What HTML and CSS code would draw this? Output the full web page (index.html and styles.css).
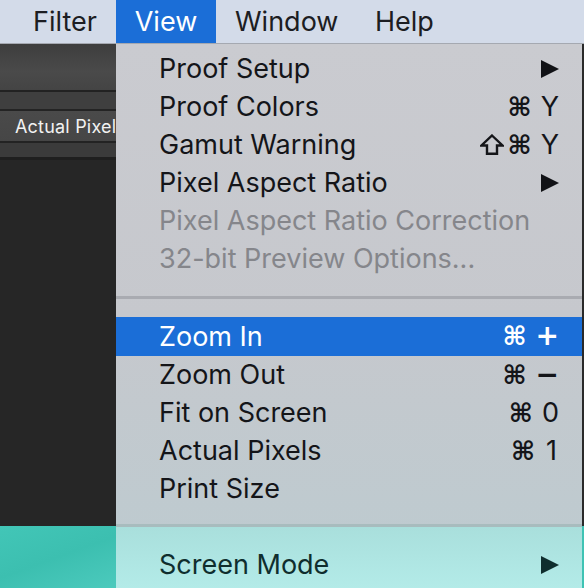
FILE: index.html
```html
<!DOCTYPE html>
<html>
<head>
<meta charset="utf-8">
<link rel="stylesheet" href="styles.css">
</head>
<body>
<div class="screen">
  <div class="menubar">
    <span class="mb-item mb-filter">Filter</span>
    <span class="mb-item mb-active">View</span>
    <span class="mb-item mb-window">Window</span>
    <span class="mb-item">Help</span>
  </div>
  <div class="main">
    <div class="app">
      <div class="tool tool-top"></div>
      <div class="tool tool-thin"></div>
      <div class="tool tool-btn"><span class="btn-label">Actual Pixel</span></div>
      <div class="tool tool-thin2"></div>
      <div class="canvas-dark"></div>
      <div class="canvas-teal"></div>
    </div>
    <div class="menu">
      <div class="section">
        <div class="item"><span class="label">Proof Setup</span><svg class="arrow" viewBox="0 0 18 18"><polygon points="0,0 18,9 0,18"/></svg></div>
        <div class="item"><span class="label">Proof Colors</span><span class="sc"><span class="sym">⌘</span><span class="key">Y</span></span></div>
        <div class="item"><span class="label">Gamut Warning</span><span class="sc"><span class="shift-wrap"><svg class="shift" viewBox="0 0 24 21"><polygon points="12,1.5 22.5,11.5 17,11.5 17,19.8 7,19.8 7,11.5 1.5,11.5"/></svg><span class="sym">⌘</span></span><span class="key">Y</span></span></div>
        <div class="item"><span class="label">Pixel Aspect Ratio</span><svg class="arrow" viewBox="0 0 18 18"><polygon points="0,0 18,9 0,18"/></svg></div>
        <div class="item disabled"><span class="label">Pixel Aspect Ratio Correction</span></div>
        <div class="item disabled"><span class="label">32-bit Preview Options...</span></div>
      </div>
      <div class="sep"></div>
      <div class="section">
        <div class="item selected"><span class="label">Zoom In</span><span class="sc"><span class="sym">⌘</span><span class="key key-op">+</span></span></div>
        <div class="item"><span class="label">Zoom Out</span><span class="sc"><span class="sym">⌘</span><span class="key key-op">−</span></span></div>
        <div class="item"><span class="label">Fit on Screen</span><span class="sc"><span class="sym">⌘</span><span class="key">0</span></span></div>
        <div class="item"><span class="label">Actual Pixels</span><span class="sc"><span class="sym">⌘</span><span class="key">1</span></span></div>
        <div class="item"><span class="label">Print Size</span></div>
      </div>
      <div class="sep-gap"></div>
      <div class="section section-teal">
        <div class="item item-teal"><span class="label">Screen Mode</span><svg class="arrow" viewBox="0 0 18 18"><polygon points="0,0 18,9 0,18"/></svg></div>
      </div>
    </div>
    <div class="edge">
      <div class="edge-dark"></div>
      <div class="edge-teal"></div>
    </div>
  </div>
</div>
</body>
</html>
```

FILE: styles.css
```css
* { box-sizing: border-box; }
html, body { margin: 0; padding: 0; }
body {
  width: 584px;
  height: 588px;
  overflow: hidden;
  font-family: Inter, "Liberation Sans", sans-serif;
  background: #262626;
}
.screen {
  display: flex;
  flex-direction: column;
  width: 584px;
  height: 588px;
}
.menubar {
  height: 44px;
  flex: none;
  display: flex;
  align-items: stretch;
  background: #d3dbe9;
  border-bottom: 1px solid #a5a9b1;
  padding-left: 14px;
  font-size: 27px;
  color: #1c1d22;
}
.mb-item {
  display: flex;
  align-items: center;
  padding: 0 19px 1px 19px;
}
.mb-filter { width: 102px; justify-content: center; }
.mb-active {
  background: #1b6ed7;
  color: #ffffff;
  width: 100px;
  justify-content: center;
}
.mb-window { width: 140px; padding-right: 0; }
.main {
  flex: 1;
  display: flex;
  min-height: 0;
}
.app {
  width: 116px;
  flex: none;
  display: flex;
  flex-direction: column;
  overflow: hidden;
}
.tool { flex: none; }
.tool-top {
  height: 48px;
  background: linear-gradient(#3e3e3e, #4a4a4a 60%, #444444);
  border-bottom: 2px solid #222222;
}
.tool-thin {
  height: 19px;
  background: #3f3f3f;
  border-bottom: 2px solid #242424;
}
.tool-btn {
  height: 32px;
  background: linear-gradient(#4a4a4a, #464646);
  border-bottom: 2px solid #232323;
  display: flex;
  align-items: center;
  padding-left: 15px;
  white-space: nowrap;
}
.btn-label {
  color: #f2f2f2;
  font-family: Inter, "Liberation Sans", sans-serif;
  font-size: 18px;
  letter-spacing: 0.2px;
}
.tool-thin2 {
  height: 17px;
  background: #3b3b3b;
  border-bottom: 3px solid #1f1f1f;
}
.canvas-dark {
  flex: 1;
  background: #262626;
}
.canvas-teal {
  height: 62px;
  flex: none;
  background: linear-gradient(160deg, #42c6b7, #3cbfb0 50%, #4ccabd);
}
.menu {
  width: 466px;
  flex: none;
  display: flex;
  flex-direction: column;
  padding-top: 6px;
  background: linear-gradient(#cacbd0 0%, #c6c8cd 50%, #bccbd0 100%);
  font-size: 27px;
  color: #141519;
}
.section { display: flex; flex-direction: column; }
.item {
  height: 38px;
  flex: none;
  display: flex;
  align-items: center;
  justify-content: space-between;
  padding: 0 23px 1px 43px;
  white-space: nowrap;
}
.disabled { color: #85868b; }
.selected {
  background: #1b6ed7;
  color: #ffffff;
  height: 39px;
}
.selected .arrow { fill: #ffffff; }
.sc {
  display: flex;
  align-items: center;
  gap: 9px;
}
.shift-wrap {
  display: flex;
  align-items: center;
  gap: 4px;
}
.shift {
  width: 24px;
  height: 21px;
  fill: none;
  stroke: #141519;
  stroke-width: 2.4;
  stroke-linejoin: miter;
}
.sym {
  font-family: "DejaVu Sans", sans-serif;
  font-size: 26px;
  font-weight: bold;
  line-height: 1;
}
.key {
  display: inline-block;
  min-width: 15px;
  text-align: center;
}
.key-op {
  font-family: "DejaVu Sans", sans-serif;
  font-weight: bold;
  font-size: 28px;
  line-height: 1;
  min-width: 17px;
}
.arrow {
  width: 18px;
  height: 18px;
  fill: #111216;
}
.sep {
  height: 39px;
  flex: none;
  display: flex;
  align-items: center;
}
.sep::after {
  content: "";
  display: block;
  width: 100%;
  height: 3px;
  background: #a9abb1;
}
.sep-gap {
  height: 19px;
  flex: none;
  border-bottom: 3px solid #a8bcbe;
}
.section-teal {
  flex: 1;
  padding-top: 19px;
  background: linear-gradient(#a9dfdc, #b3ebe8);
}
.item-teal { color: #0f2e2e; }
.item-teal .arrow { fill: #0f2e2e; }
.edge {
  flex: 1;
  display: flex;
  flex-direction: column;
}
.edge-dark { flex: 1; background: #2a2a2a; }
.edge-teal { height: 62px; background: #3fc3b4; }
```
